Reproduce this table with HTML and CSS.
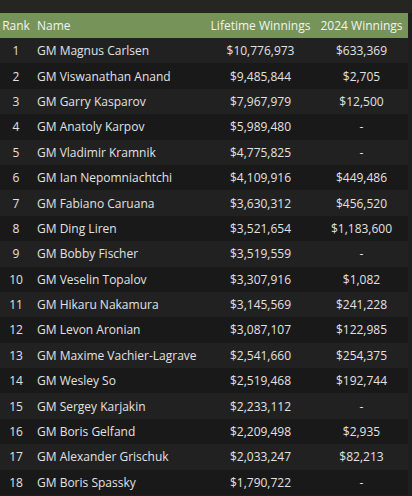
FILE: index.html
```html
<!DOCTYPE html>
<html>
<head>
<meta charset="utf-8">
<link rel="stylesheet" href="styles.css">
</head>
<body>
<table class="board">
  <colgroup>
    <col class="c-rank"><col class="c-name"><col class="c-life"><col class="c-year">
  </colgroup>
  <thead>
    <tr><th class="rank">Rank</th><th class="name">Name</th><th>Lifetime Winnings</th><th>2024 Winnings</th></tr>
  </thead>
  <tbody>
    <tr><td class="rank">1</td><td class="name">GM Magnus Carlsen</td><td>$10,776,973</td><td>$633,369</td></tr>
    <tr><td class="rank">2</td><td class="name">GM Viswanathan Anand</td><td>$9,485,844</td><td>$2,705</td></tr>
    <tr><td class="rank">3</td><td class="name">GM Garry Kasparov</td><td>$7,967,979</td><td>$12,500</td></tr>
    <tr><td class="rank">4</td><td class="name">GM Anatoly Karpov</td><td>$5,989,480</td><td>-</td></tr>
    <tr><td class="rank">5</td><td class="name">GM Vladimir Kramnik</td><td>$4,775,825</td><td>-</td></tr>
    <tr><td class="rank">6</td><td class="name">GM Ian Nepomniachtchi</td><td>$4,109,916</td><td>$449,486</td></tr>
    <tr><td class="rank">7</td><td class="name">GM Fabiano Caruana</td><td>$3,630,312</td><td>$456,520</td></tr>
    <tr><td class="rank">8</td><td class="name">GM Ding Liren</td><td>$3,521,654</td><td>$1,183,600</td></tr>
    <tr><td class="rank">9</td><td class="name">GM Bobby Fischer</td><td>$3,519,559</td><td>-</td></tr>
    <tr><td class="rank">10</td><td class="name">GM Veselin Topalov</td><td>$3,307,916</td><td>$1,082</td></tr>
    <tr><td class="rank">11</td><td class="name">GM Hikaru Nakamura</td><td>$3,145,569</td><td>$241,228</td></tr>
    <tr><td class="rank">12</td><td class="name">GM Levon Aronian</td><td>$3,087,107</td><td>$122,985</td></tr>
    <tr><td class="rank">13</td><td class="name">GM Maxime Vachier-Lagrave</td><td>$2,541,660</td><td>$254,375</td></tr>
    <tr><td class="rank">14</td><td class="name">GM Wesley So</td><td>$2,519,468</td><td>$192,744</td></tr>
    <tr><td class="rank">15</td><td class="name">GM Sergey Karjakin</td><td>$2,233,112</td><td>-</td></tr>
    <tr><td class="rank">16</td><td class="name">GM Boris Gelfand</td><td>$2,209,498</td><td>$2,935</td></tr>
    <tr><td class="rank">17</td><td class="name">GM Alexander Grischuk</td><td>$2,033,247</td><td>$82,213</td></tr>
    <tr><td class="rank">18</td><td class="name">GM Boris Spassky</td><td>$1,790,722</td><td>-</td></tr>
  </tbody>
</table>
</body>
</html>
```

FILE: styles.css
```css
html, body {
  margin: 0;
  padding: 0;
  background: #1e1e1e;
}
body {
  padding-top: 13px;
  background: linear-gradient(#252521 0, #252521 13px, #1e1e1e 13px);
  min-height: 496px;
  box-sizing: border-box;
  font-family: "Open Sans", "Noto Sans", sans-serif;
  font-size: 12px;
  color: #e2e2e2;
}
.board {
  width: 408px;
  table-layout: fixed;
  border-collapse: collapse;
}
.c-rank { width: 32px; }
.c-name { width: 174px; }
.c-life { width: 109px; }
.c-year { width: 93px; }
.board th, .board td {
  padding: 0;
  text-align: center;
  white-space: nowrap;
  font-weight: normal;
}
.board th {
  height: 25px;
  background: #76935a;
  color: #f2f4ee;
}
.board td {
  height: 25.4px;
}
.board .name {
  text-align: left;
  padding-left: 5px;
}
.board tbody tr:nth-child(odd) { background: #212121; }
.board tbody tr:nth-child(even) { background: #191919; }
```
